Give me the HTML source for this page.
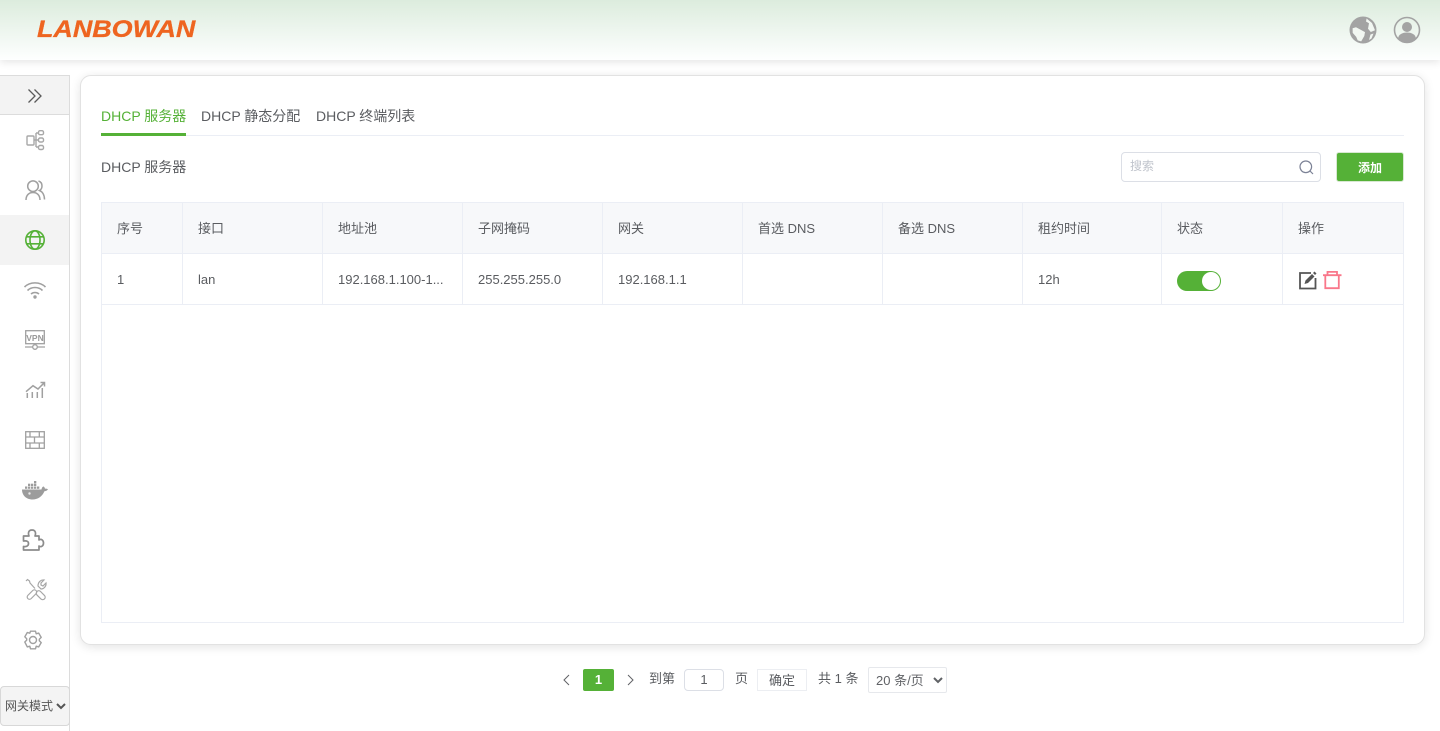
<!DOCTYPE html>
<html lang="zh-CN">
<head>
<meta charset="utf-8">
<title>DHCP</title>
<style>
*{box-sizing:border-box}
html,body{margin:0;padding:0;width:1440px;height:731px;overflow:hidden;background:#fff}
body{position:relative;font-family:"Liberation Sans","WenQuanYi Zen Hei","Noto Sans CJK SC",sans-serif;font-size:13px;color:#5a5c60}
.a{position:absolute;white-space:nowrap}
#hd{left:0;top:0;width:1440px;height:60px;background:linear-gradient(#dcecdd,#feffff);box-shadow:0 2px 8px rgba(0,0,0,.11)}
#logo{left:37px;top:15px;font:italic bold 24px/30px "Liberation Sans",sans-serif;color:#ee6520;-webkit-text-stroke:.3px #ee6520;transform-origin:left center;transform:scaleX(1.12)}
#side{left:0;top:75px;width:70px;height:656px;border-right:1px solid #dcdcdc}
#col{left:0;top:75px;width:70px;height:40px;background:#f3f3f3;border:1px solid #dcdcdc;border-left:0}
#act{left:0;top:215px;width:69px;height:50px;background:#f3f3f3}
#card{left:80px;top:75px;width:1345px;height:570px;background:#fff;border:1px solid #e2e2e2;border-radius:11px;box-shadow:0 2px 10px rgba(0,0,0,.11)}
.ln{background:#ebeef5}
.th{top:203px;height:50px;background:#f7f8fa}
.t{line-height:20px}
svg{position:absolute;overflow:visible}
select{font-family:inherit}
</style>
</head>
<body>
<div class="a" id="hd"></div>
<div class="a" id="logo">LANBOWAN</div>

<svg style="left:1349px;top:16px" width="28" height="28" viewBox="0 0 28 28"><circle cx="14" cy="14" r="13.500" fill="#a3a3a3"/><path d="M3.600 12.200l3.400-1 4 2.200 5 2.700-.7 3.900-3.100 5.400-3.500-1-1.500-3.500-3.500-4zM17.600 2.500l5.400 4.500 3 7.300-4.200 1.700-2.800-3.300 1-5.400-3-1.800zM21.500 18.500l3-1-2 5-2.500 1.500z" fill="#f2f7f2"/></svg>
<svg style="left:1393px;top:16px" width="28" height="28" viewBox="0 0 28 28"><circle cx="14" cy="14" r="12.500" fill="none" stroke="#a3a3a3" stroke-width="1.600"/><circle cx="14" cy="11" r="5" fill="#a3a3a3"/><path d="M5 22.500c.5-4.500 5-6 9-6s8.500 1.500 9 6c-2 2.500-5 3.800-9 3.800s-7-1.300-9-3.800z" fill="#a3a3a3"/></svg>

<div class="a" id="side"></div>
<div class="a" id="col"></div>
<div class="a" id="act"></div>

<svg style="left:28px;top:89px" width="14" height="14" viewBox="0 0 14 14" fill="none" stroke="#5a5a5a" stroke-width="1.300"><path d="M.5 .5L7 7 .5 13.500M6.500 .5L13 7 6.500 13.500"/></svg>

<!-- topology -->
<svg style="left:26px;top:130px" width="18" height="21" viewBox="0 0 18 21" fill="none" stroke="#a8a8a8" stroke-width="1.400"><rect x="1" y="6" width="7" height="9" rx="1"/><rect x="12.500" y=".7" width="5" height="4" rx="1.500"/><rect x="12.500" y="8" width="5" height="4" rx="1.500"/><rect x="12.500" y="15.500" width="5" height="4" rx="1.500"/><path d="M8 10h4.500M10 3v14M10 3h2.500M10 17h2.500"/></svg>
<!-- users -->
<svg style="left:25px;top:180px" width="20" height="20" viewBox="0 0 20 20" fill="none" stroke="#a0a0a0" stroke-width="1.500"><circle cx="8" cy="6.200" r="5.300"/><path d="M1 20c0-4.800 3-7.500 7-7.500s7 2.700 7 7.500M13.500 1c2.500.8 3.500 3 3.500 5s-1 3.700-2.500 4.500c3 1.200 5 4.500 5 9"/></svg>
<!-- globe -->
<svg style="left:25px;top:230px" width="20" height="20" viewBox="0 0 20 20" fill="none" stroke="#55b137" stroke-width="1.600"><circle cx="10" cy="10" r="9.200"/><ellipse cx="10" cy="10" rx="5" ry="9.200"/><path d="M1.500 6.800h17M1.500 13.800h17"/></svg>
<!-- wifi -->
<svg style="left:24px;top:281px" width="22" height="18" viewBox="0 0 22 18" fill="none" stroke="#a0a0a0" stroke-width="1.600"><path d="M.5 6C6 .5 16 .5 21.500 6M3.500 9.500C7.500 5.500 14.500 5.500 18.500 9.500M7 13c2.200-2 5.800-2 8 0"/><circle cx="11" cy="16" r="1.700" fill="#a0a0a0" stroke="none"/></svg>
<!-- vpn -->
<svg style="left:25px;top:330px" width="20" height="20" viewBox="0 0 20 20" fill="none" stroke="#a0a0a0" stroke-width="1.300"><rect x=".7" y=".7" width="18.600" height="13"/><path d="M0 17h7.500M12.500 17H20"/><circle cx="10" cy="17" r="2.300"/><text x="10" y="10.800" text-anchor="middle" font-family="Liberation Sans" font-weight="bold" font-size="8.500" fill="#9a9a9a" stroke="none">VPN</text></svg>
<!-- chart -->
<svg style="left:25px;top:381px" width="20" height="18" viewBox="0 0 20 18" fill="none" stroke="#a0a0a0" stroke-width="1.500"><path d="M1 10.700L8 4.700 13 8l6.300-6.300M15.500 1.500h4v4M2.300 17v-5M7.300 17v-6M12.300 17v-6M17.300 17V7"/></svg>
<!-- firewall -->
<svg style="left:25px;top:431px" width="20" height="18" viewBox="0 0 20 18" fill="none" stroke="#a0a0a0" stroke-width="1.300"><rect x=".7" y=".7" width="18.600" height="16.600"/><path d="M.5 6h19M.5 12h19M5 .5V6M14.300 .5V6M9.500 6v6M5 12v5.500M14.300 12v5.500"/></svg>
<!-- docker -->
<svg style="left:22px;top:481px" width="26" height="19" viewBox="0 0 26 19"><path d="M0 8.500h19.500c.3-1.700 1.200-3 2-3 .8.300 1.300 1.300 1.500 2.300.9-.3 1.900-.1 3 .5-1 1.500-2.300 2-3.600 1.900C20.500 15 16 18.500 10.500 18.500 4 18.500 0 14 0 8.500z" fill="#9c9c9c"/><g fill="#9c9c9c"><rect x="3" y="5.500" width="2.300" height="2.300"/><rect x="6" y="5.500" width="2.300" height="2.300"/><rect x="9" y="5.500" width="2.300" height="2.300"/><rect x="12" y="5.500" width="2.300" height="2.300"/><rect x="15" y="5.500" width="2.300" height="2.300"/><rect x="6" y="2.700" width="2.300" height="2.300"/><rect x="9" y="2.700" width="2.300" height="2.300"/><rect x="12" y="2.700" width="2.300" height="2.300"/><rect x="12" y="0" width="2.300" height="2.300"/></g><circle cx="7.500" cy="12.500" r="1.200" fill="#e8e8e8"/></svg>
<!-- puzzle -->
<svg style="left:22px;top:529px" width="22" height="22" viewBox="0 0 22 22" fill="none" stroke="#8c8c8c" stroke-width="1.700" stroke-linejoin="round"><path d="M1.500 7H7C6 5 6 1 10 1s4 4 3 6h4v4c2-1.500 4.500 0 4.500 3s-2.500 4.500-4.500 3v4H1.500v-3.500C5 18 6.500 16.500 6.500 14.500S5 11.500 1.500 12z"/></svg>
<!-- tools -->
<svg style="left:25px;top:579px" width="21" height="22" viewBox="0 0 21 22" fill="none" stroke="#a6a6a6" stroke-width="1.200"><path d="M1 2l1.500-1.500 2 1.500.5 2 5 5.500"/><rect x="-2.500" y="0" width="5" height="10.500" rx="2.500" transform="translate(12,12.500) rotate(-45)"/><rect x="-2.300" y="0" width="4.600" height="11.500" rx="2.300" transform="translate(11,11.500) rotate(45)"/><path d="M19 1l-3 3v2l2 1 3-3c.5 3-2 6-5 6l-3-3c0-4 3-6.500 6-6z"/></svg>
<!-- gear -->
<svg style="left:23px;top:630px" width="20" height="20" viewBox="0 0 20 20" fill="none" stroke="#a0a0a0" stroke-width="1.400"><path d="M7.500 1.200h5l.7 2.600 2.500-.7 2.500 4.300-1.900 1.900v1.400l1.900 1.900-2.500 4.300-2.500-.7-.7 2.600h-5l-.7-2.600-2.500.7L1.800 12l1.900-1.900V8.700L1.800 6.800l2.500-4.300 2.500.7z" stroke-linejoin="round"/><circle cx="10" cy="10" r="3.500"/></svg>

<select class="a" style="left:0;top:686px;width:70px;height:40px;background:#f4f4f4;border:1px solid #d8d8d8;border-radius:4px;font-size:12px;color:#555;padding:0"><option>网关模式</option></select>

<div class="a" id="card"></div>

<div class="a t" style="left:101px;top:106px;color:#55b137;font-size:14px">DHCP 服务器</div>
<div class="a t" style="left:201px;top:106px;font-size:14px">DHCP 静态分配</div>
<div class="a t" style="left:316px;top:106px;font-size:14px">DHCP 终端列表</div>
<div class="a ln" style="left:101px;top:135px;width:1303px;height:1px"></div>
<div class="a" style="left:101px;top:133px;width:85px;height:3px;background:#55b137"></div>

<div class="a t" style="left:101px;top:157px;font-size:14px">DHCP 服务器</div>

<div class="a" style="left:1121px;top:152px;width:200px;height:30px;border:1px solid #dcdfe6;border-radius:4px"></div>
<div class="a t" style="left:1130px;top:156px;font-size:12px;color:#c0c4cc">搜索</div>
<svg style="left:1299px;top:160px" width="15" height="15" viewBox="0 0 15 15" fill="none" stroke="#7c8296" stroke-width="1.200"><circle cx="6.800" cy="6.800" r="5.800"/><path d="M11 11l3 3"/></svg>
<div class="a t" style="left:1336px;top:152px;width:68px;height:30px;background:#55b137;border:1px solid #d8e8d2;border-radius:3px;color:#fff;text-align:center;line-height:30px;font-size:12px;font-weight:bold">添加</div>

<!-- table -->
<div class="a th" style="left:101px;width:1303px"></div>
<div class="a" style="left:101px;top:202px;width:1303px;height:421px;border:1px solid #ebeef5"></div>
<div class="a ln" style="left:101px;top:253px;width:1303px;height:1px"></div>
<div class="a ln" style="left:101px;top:304px;width:1303px;height:1px"></div>
<div class="a ln" style="left:182px;top:203px;width:1px;height:101px"></div>
<div class="a ln" style="left:322px;top:203px;width:1px;height:101px"></div>
<div class="a ln" style="left:462px;top:203px;width:1px;height:101px"></div>
<div class="a ln" style="left:602px;top:203px;width:1px;height:101px"></div>
<div class="a ln" style="left:742px;top:203px;width:1px;height:101px"></div>
<div class="a ln" style="left:882px;top:203px;width:1px;height:101px"></div>
<div class="a ln" style="left:1022px;top:203px;width:1px;height:101px"></div>
<div class="a ln" style="left:1161px;top:203px;width:1px;height:101px"></div>
<div class="a ln" style="left:1282px;top:203px;width:1px;height:101px"></div>

<div class="a t" style="left:117px;top:219px">序号</div>
<div class="a t" style="left:198px;top:219px">接口</div>
<div class="a t" style="left:338px;top:219px">地址池</div>
<div class="a t" style="left:478px;top:219px">子网掩码</div>
<div class="a t" style="left:618px;top:219px">网关</div>
<div class="a t" style="left:758px;top:219px">首选 DNS</div>
<div class="a t" style="left:898px;top:219px">备选 DNS</div>
<div class="a t" style="left:1038px;top:219px">租约时间</div>
<div class="a t" style="left:1177px;top:219px">状态</div>
<div class="a t" style="left:1298px;top:219px">操作</div>

<div class="a t" style="left:117px;top:270px">1</div>
<div class="a t" style="left:198px;top:270px">lan</div>
<div class="a t" style="left:338px;top:270px">192.168.1.100-1...</div>
<div class="a t" style="left:478px;top:270px">255.255.255.0</div>
<div class="a t" style="left:618px;top:270px">192.168.1.1</div>
<div class="a t" style="left:1038px;top:270px">12h</div>

<div class="a" style="left:1177px;top:271px;width:44px;height:20px;border-radius:10px;background:#55b137"></div>
<div class="a" style="left:1202px;top:272px;width:18px;height:18px;border-radius:50%;background:#fff"></div>

<svg style="left:1299px;top:271px" width="18" height="18" viewBox="0 0 18 18" fill="none"><path d="M12 2H1v15.500h15.500V7" stroke="#555" stroke-width="1.800"/><path d="M5.500 13l1-3.500L13 3l2.500 2.500L9 12z" fill="#555"/><path d="M14 2l1.500-1.500 2 2L16 4z" fill="#555"/></svg>
<svg style="left:1323px;top:271px" width="19" height="18" viewBox="0 0 19 18" fill="none" stroke="#f9778a" stroke-width="1.800"><path d="M0 4.200h18.500M2.300 4.200v13h13.500v-13M4.500 4.200V.9h9.500v3.300"/></svg>

<!-- pagination -->
<svg style="left:562px;top:674px" width="8" height="12" viewBox="0 0 8 12" fill="none" stroke="#606266" stroke-width="1"><path d="M7 1L2 6l5 5"/></svg>
<div class="a" style="left:583px;top:669px;width:31px;height:22px;background:#55b137;border-radius:2px;color:#fff;font-weight:bold;font-size:13px;text-align:center;line-height:22px">1</div>
<svg style="left:627px;top:674px" width="8" height="12" viewBox="0 0 8 12" fill="none" stroke="#606266" stroke-width="1"><path d="M1 1l5 5-5 5"/></svg>
<div class="a t" style="left:649px;top:669px">到第</div>
<div class="a" style="left:684px;top:669px;width:40px;height:22px;border:1px solid #dcdfe6;border-radius:4px;text-align:center;line-height:20px;font-size:13px">1</div>
<div class="a t" style="left:735px;top:669px">页</div>
<div class="a" style="left:757px;top:669px;width:50px;height:22px;border:1px solid #eceef2;text-align:center;line-height:22px;font-size:13px">确定</div>
<div class="a t" style="left:818px;top:669px">共 1 条</div>
<select class="a" style="left:868px;top:667px;width:79px;height:26px;background:#fff;border:1px solid #e6e8ec;border-radius:2px;font-size:13px;color:#606266;padding:0 0 0 3px"><option>20 条/页</option></select>
</body>
</html>
